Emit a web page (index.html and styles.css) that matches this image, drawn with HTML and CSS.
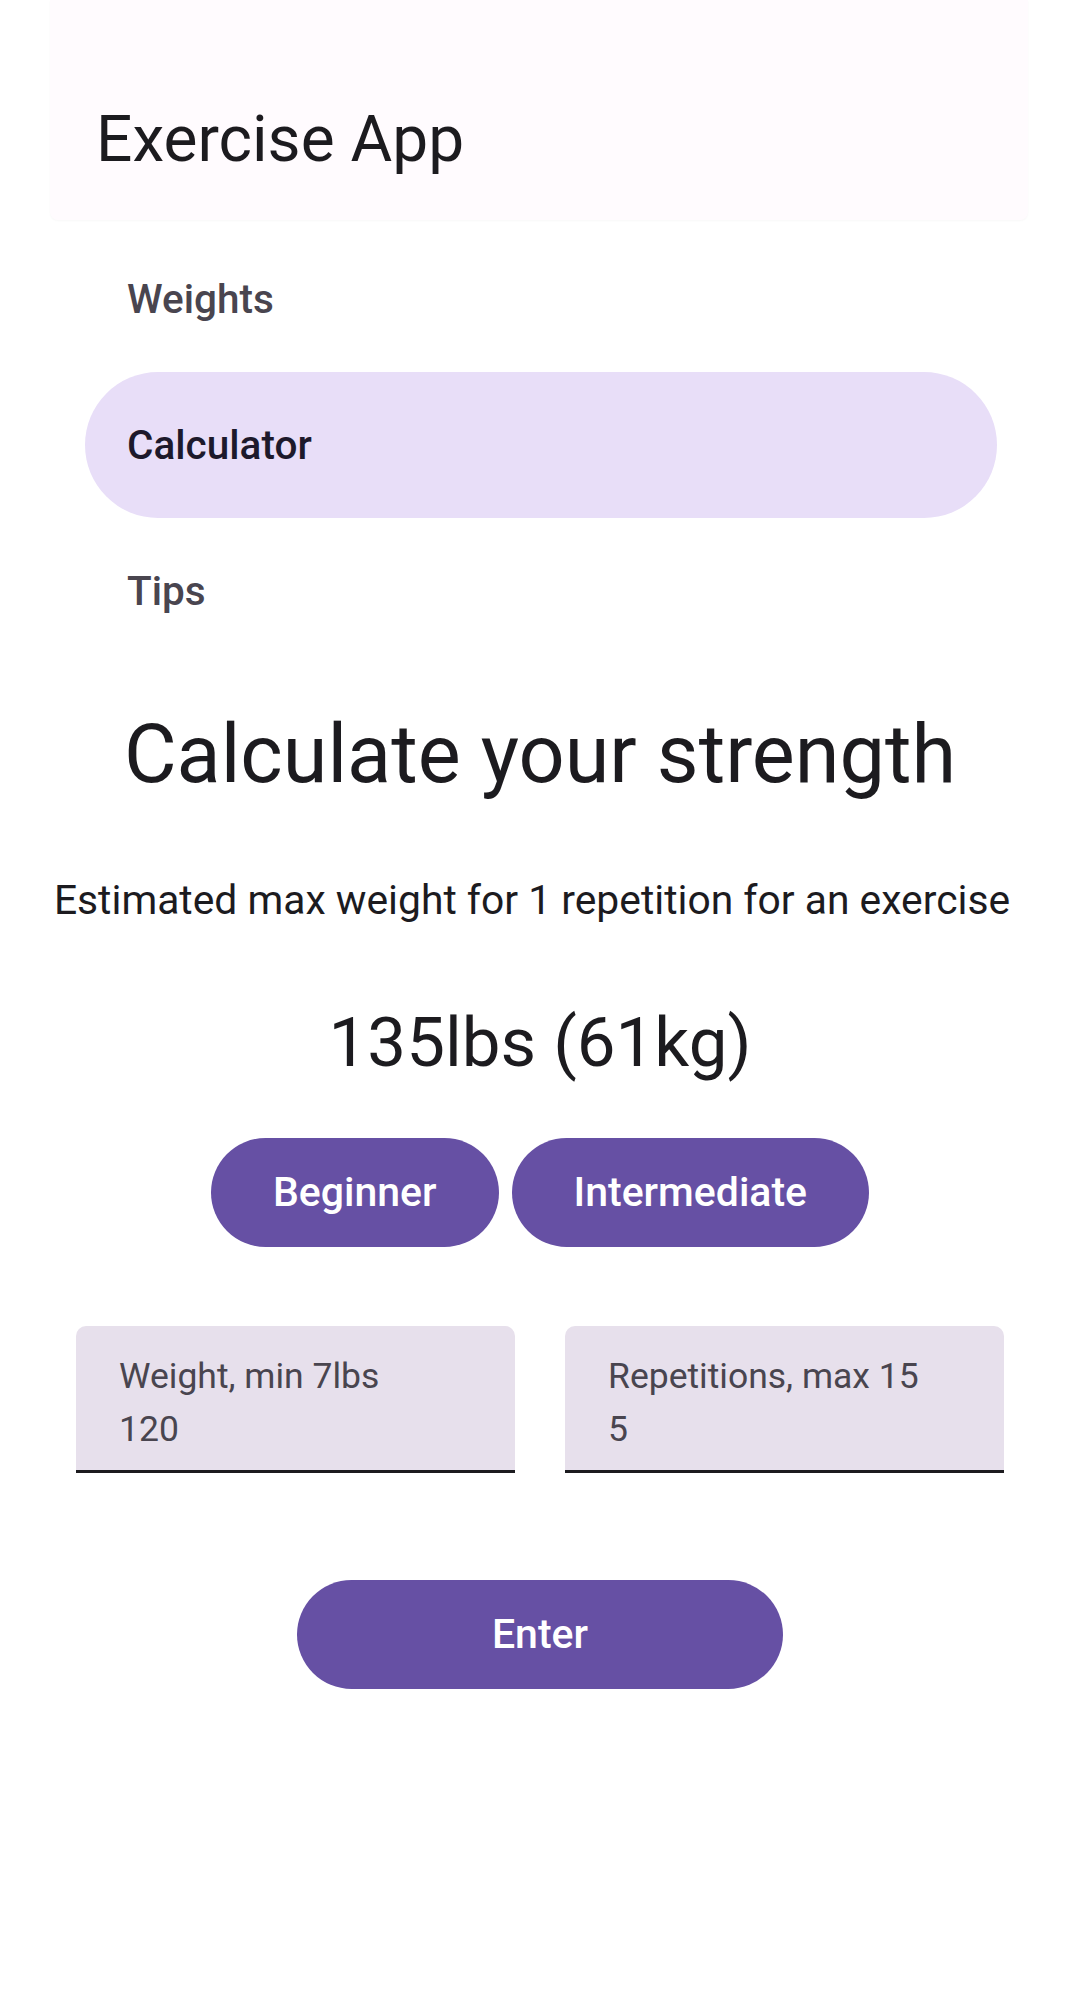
FILE: index.html
```html
<!DOCTYPE html>
<html lang="en">
<head>
<meta charset="utf-8">
<title>Exercise App</title>
<link rel="stylesheet" href="styles.css">
</head>
<body>
<div class="app">
  <header class="top-bar">
    <h1 class="app-title">Exercise App</h1>
  </header>
  <nav class="drawer">
    <div class="drawer-item">Weights</div>
    <div class="drawer-item selected">Calculator</div>
    <div class="drawer-item">Tips</div>
  </nav>
  <main class="content">
    <h2 class="headline">Calculate your strength</h2>
    <p class="subtitle">Estimated max weight for 1 repetition for an exercise</p>
    <p class="result">135lbs (61kg)</p>
    <div class="level-row">
      <button class="btn">Beginner</button>
      <button class="btn">Intermediate</button>
    </div>
    <div class="field-row">
      <div class="field">
        <span class="field-label">Weight, min 7lbs</span>
        <span class="field-value">120</span>
      </div>
      <div class="field">
        <span class="field-label">Repetitions, max 15</span>
        <span class="field-value">5</span>
      </div>
    </div>
    <button class="btn btn-enter">Enter</button>
  </main>
</div>
</body>
</html>
```

FILE: styles.css
```css
* { box-sizing: border-box; }

html, body {
  margin: 0;
  padding: 0;
  background: #ffffff;
}

body {
  font-family: Roboto, "Noto Sans", "Liberation Sans", sans-serif;
  color: #1c1b1f;
  width: 1080px;
  min-height: 2011px;
}

.app {
  display: flex;
  flex-direction: column;
}

.top-bar {
  margin: 0 52px 0 50px;
  height: 220px;
  background: #fffbfe;
  border-radius: 0 0 8px 8px;
  box-shadow: 0 1px 2px rgba(0, 0, 0, 0.03);
  padding: 108px 0 0 46px;
}

.app-title {
  margin: 0;
  font-size: 64px;
  line-height: 1;
  font-weight: 400;
  color: #1c1b1f;
}

.drawer {
  margin: 6px 83px 0 85px;
  display: flex;
  flex-direction: column;
}

.drawer-item {
  height: 146px;
  display: flex;
  align-items: center;
  padding-left: 42px;
  font-size: 40.5px;
  font-weight: 500;
  color: #49454f;
  border-radius: 73px;
}

.drawer-item.selected {
  background: #e8def8;
  color: #1d192b;
}

.content {
  display: flex;
  flex-direction: column;
  align-items: center;
}

.headline {
  margin: 50px 0 0;
  font-size: 81px;
  line-height: 1;
  font-weight: 400;
  color: #1c1b1f;
}

.subtitle {
  margin: 85px 0 0;
  padding-right: 16px;
  font-size: 40.8px;
  line-height: 1;
  color: #1c1b1f;
}

.result {
  margin: 87px 0 0;
  font-size: 69px;
  line-height: 1;
  color: #1c1b1f;
}

.level-row {
  margin-top: 61px;
  display: flex;
  gap: 13px;
}

.btn {
  height: 109px;
  padding: 0 62px;
  border: none;
  border-radius: 55px;
  background: #6650a4;
  color: #ffffff;
  font-family: inherit;
  font-size: 41px;
  font-weight: 500;
}

.field-row {
  margin-top: 79px;
  display: flex;
  gap: 50px;
}

.field {
  width: 439px;
  height: 147px;
  background: #e7e0ec;
  border-radius: 10px 10px 0 0;
  border-bottom: 3px solid #1c1b1f;
  padding: 32px 0 0 43px;
  display: flex;
  flex-direction: column;
  gap: 17px;
}

.field-label,
.field-value {
  font-size: 35.5px;
  line-height: 36px;
  color: #49454f;
}

.btn-enter {
  margin-top: 107px;
  width: 486px;
}
```
